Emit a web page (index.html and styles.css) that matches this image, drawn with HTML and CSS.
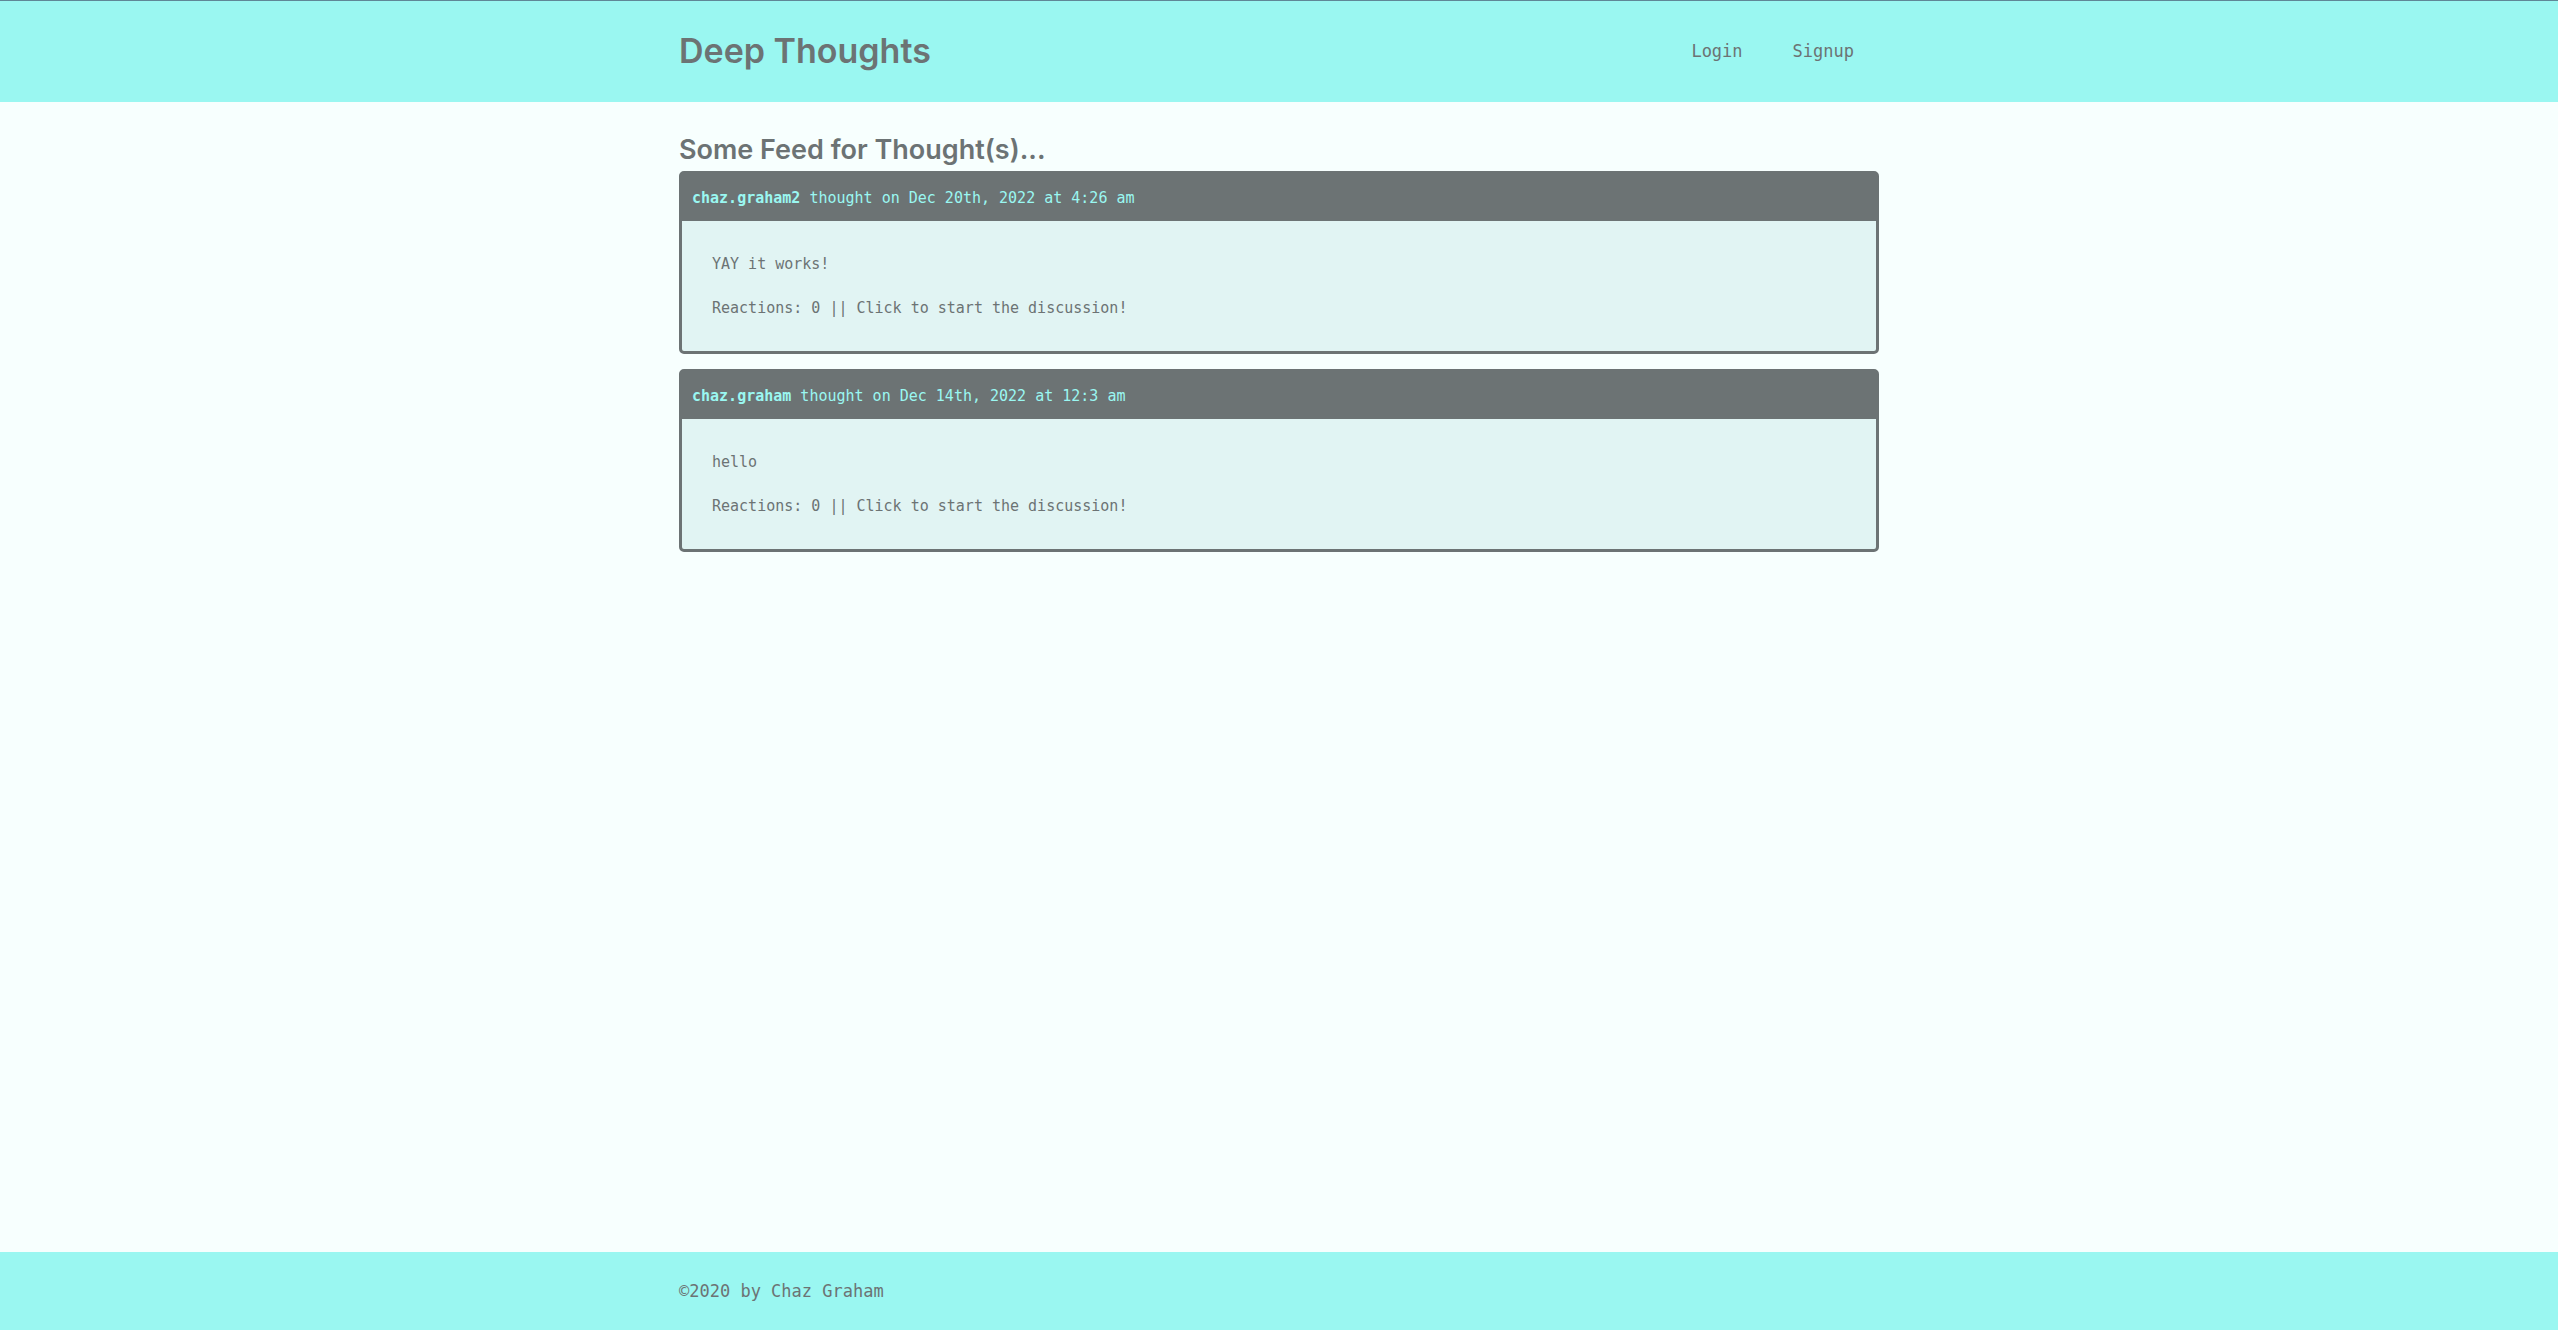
FILE: index.html
```html
<!DOCTYPE html>
<html lang="en">
<head>
  <meta charset="utf-8">
  <meta name="viewport" content="width=device-width, initial-scale=1">
  <title>Deep Thoughts</title>
  <link rel="stylesheet" href="styles.css">
</head>
<body>
  <header class="site-header">
    <div class="container header-row">
      <h1 class="site-title"><a href="#">Deep Thoughts</a></h1>
      <nav class="site-nav">
        <a href="#login">Login</a>
        <a href="#signup">Signup</a>
      </nav>
    </div>
  </header>

  <main class="container feed">
    <h2 class="feed-title">Some Feed for Thought(s)...</h2>
    <div class="thoughts">
      <article class="card">
        <p class="card-header"><a class="author" href="#profile-2">chaz.graham2</a> thought on Dec 20th, 2022 at 4:26 am</p>
        <a class="card-body" href="#thought-2">
          <p>YAY it works!</p>
          <p>Reactions: 0 || Click to start the discussion!</p>
        </a>
      </article>
      <article class="card">
        <p class="card-header"><a class="author" href="#profile-1">chaz.graham</a> thought on Dec 14th, 2022 at 12:3 am</p>
        <a class="card-body" href="#thought-1">
          <p>hello</p>
          <p>Reactions: 0 || Click to start the discussion!</p>
        </a>
      </article>
    </div>
  </main>

  <footer class="site-footer">
    <div class="container">©2020 by Chaz Graham</div>
  </footer>
</body>
</html>
```
FILE: styles.css
```css
:root {
  --primary: #9af7f1;
  --dark: #6c7374;
  --page: #f7fffe;
  --tertiary: #e1f4f3;
}

* {
  box-sizing: border-box;
  margin: 0;
  padding: 0;
}

body {
  display: flex;
  flex-direction: column;
  min-height: 100vh;
  background: var(--page);
  color: var(--dark);
  font-family: "DejaVu Sans Mono", monospace;
  font-size: 17px;
  line-height: 26px;
}

a {
  color: inherit;
  text-decoration: none;
}

.container {
  width: 100%;
  max-width: 1200px;
  margin: 0 auto;
}

.site-header {
  padding: 24px 0 25px;
  border-top: 1px solid #5f8796;
  background: var(--primary);
}

.header-row {
  display: flex;
  flex-wrap: wrap;
  align-items: center;
  justify-content: space-between;
}

.site-title,
.feed-title {
  font-family: Inter, sans-serif;
  font-weight: 600;
}

.site-title {
  font-size: 34px;
  line-height: 52px;
}

.site-nav {
  display: flex;
  gap: 50px;
  padding: 0 25px;
}

.feed {
  flex: 1;
  padding: 26px 0;
}

.feed-title {
  font-size: 27px;
  line-height: 43px;
}

.thoughts {
  display: grid;
  gap: 15px;
}

.card {
  border: 3px solid var(--dark);
  border-radius: 5px;
  background: var(--tertiary);
  font-size: 15px;
}

.card-header {
  padding: 11px 10px 10px;
  background: var(--dark);
  color: var(--primary);
}

.author {
  font-weight: 700;
}

.card-body {
  display: grid;
  gap: 18px;
  padding: 30px;
}

.site-footer {
  padding: 26px 0;
  background: var(--primary);
}
```
